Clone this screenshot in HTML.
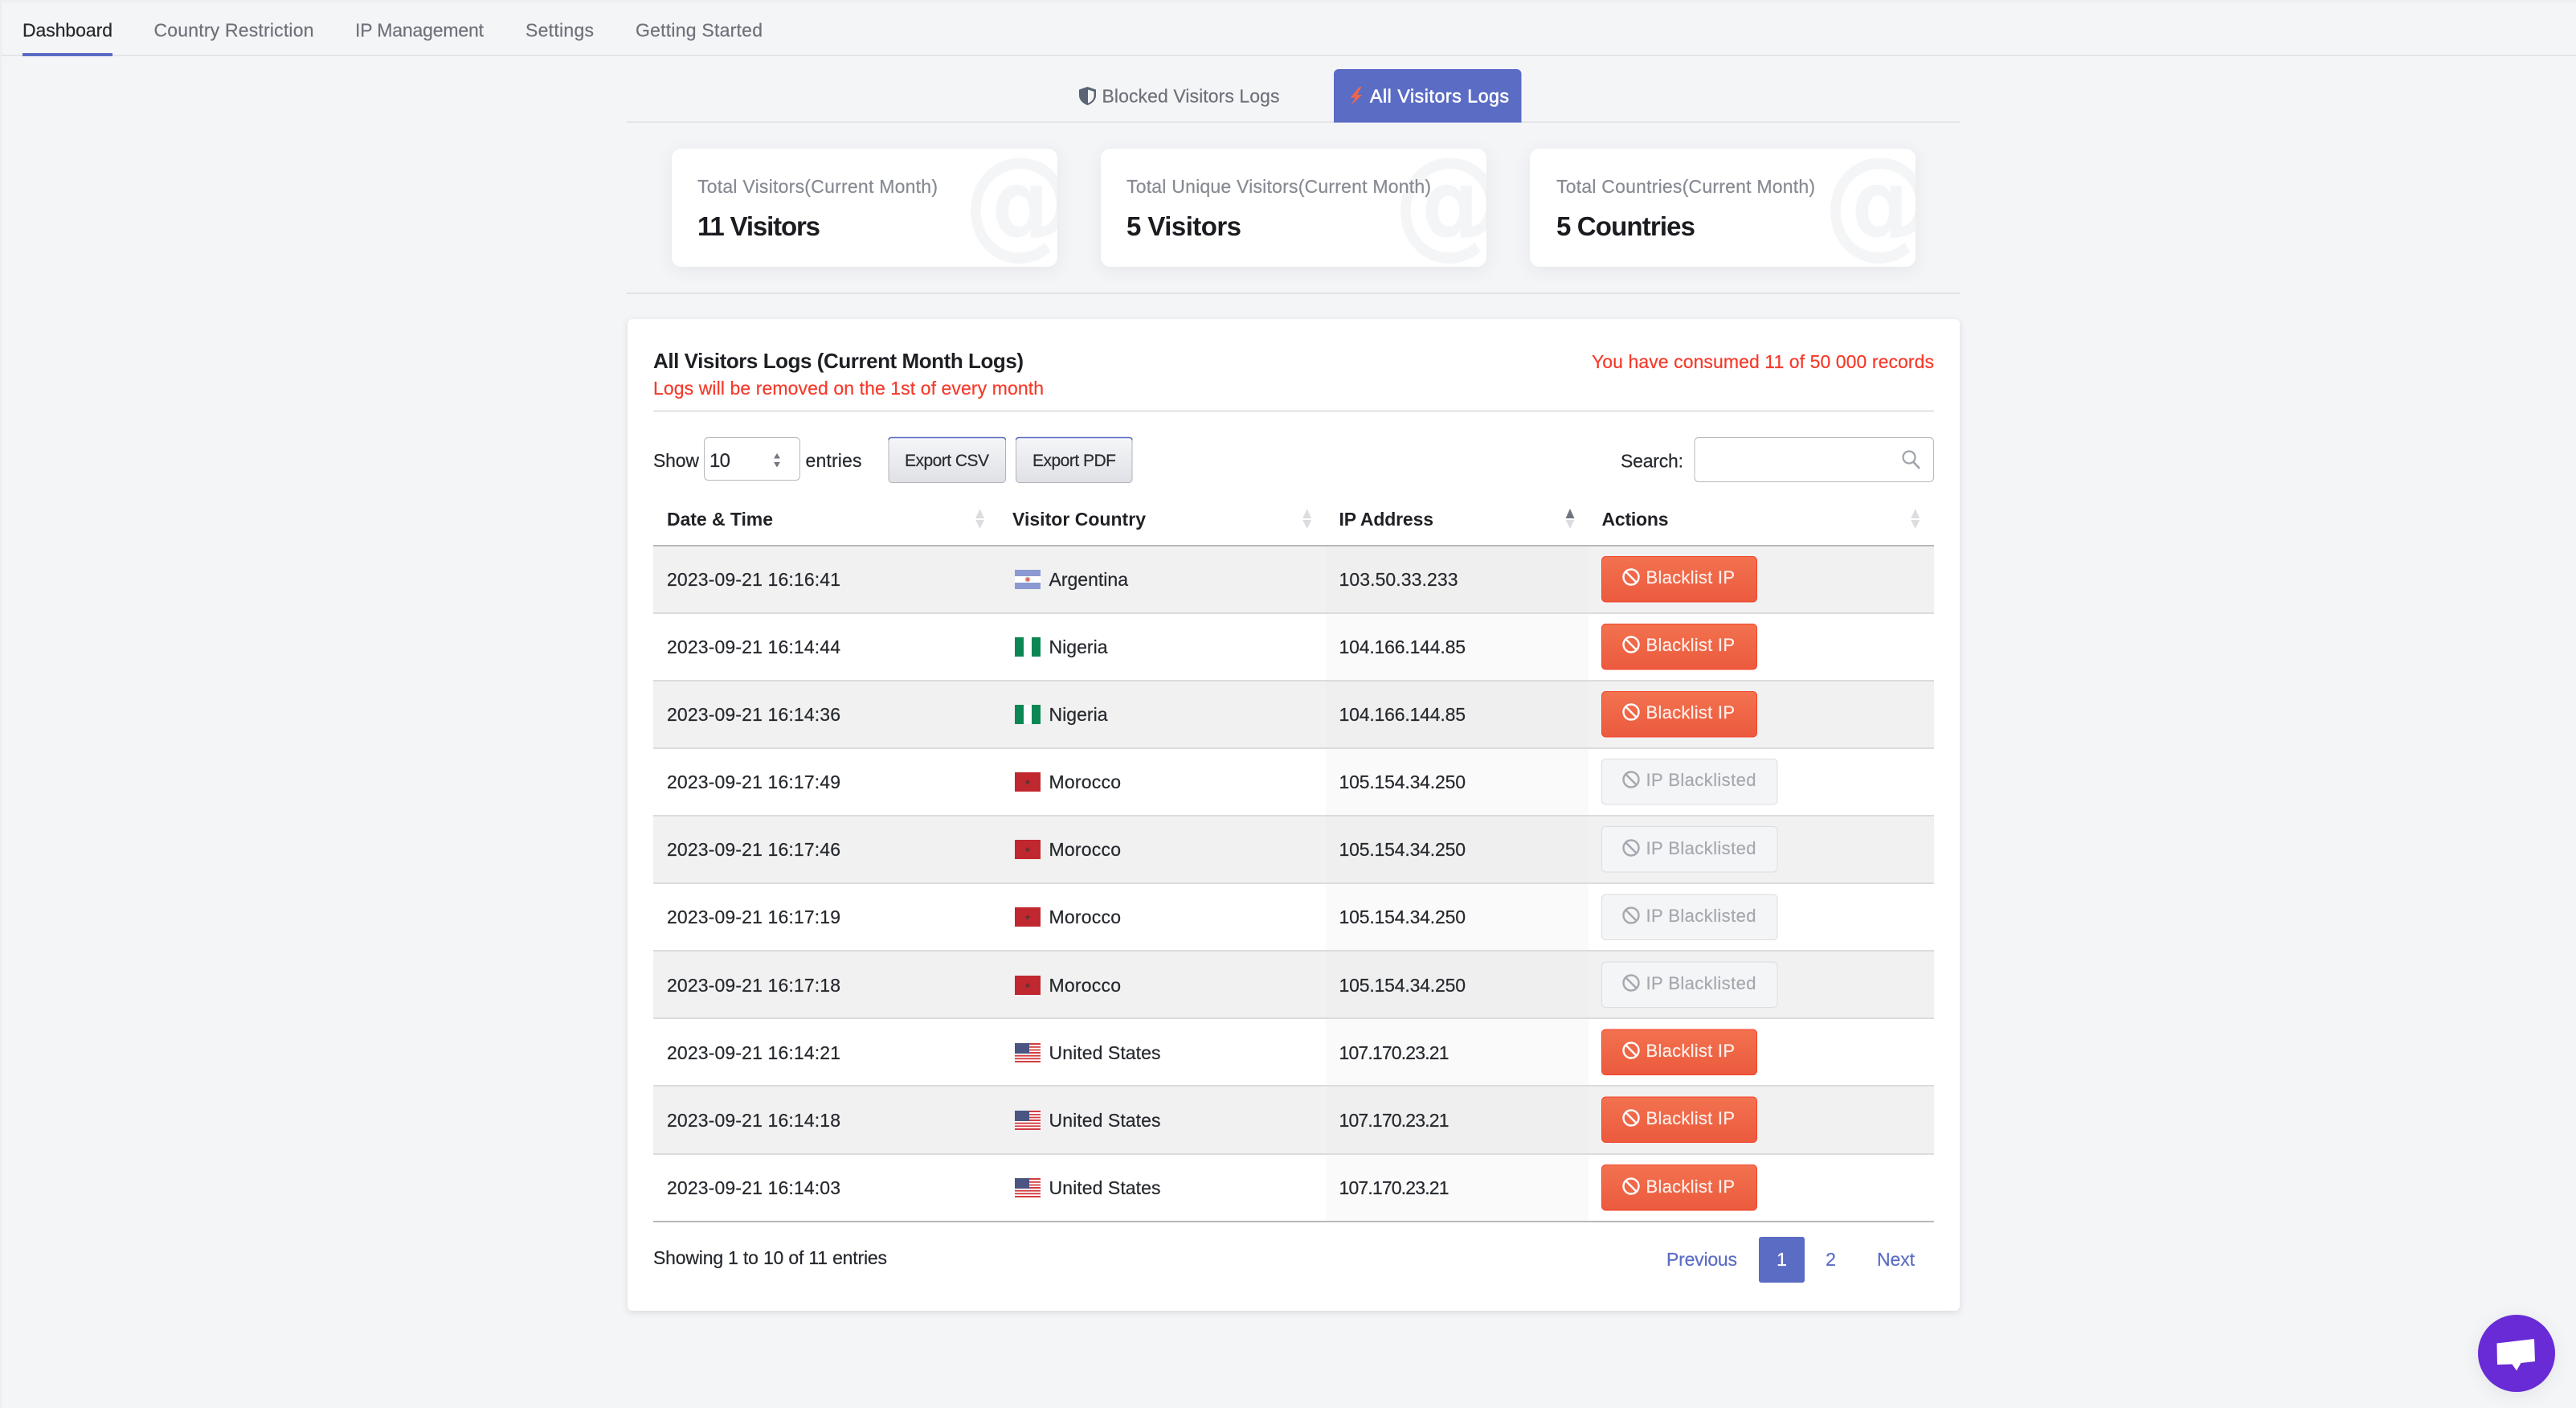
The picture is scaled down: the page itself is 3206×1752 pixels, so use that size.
<!DOCTYPE html>
<html lang="en">
<head>
<meta charset="utf-8">
<title>All Visitors Logs</title>
<style>
html,body{margin:0;padding:0;width:3206px;height:1752px;overflow:hidden;background:#f4f5f7}
svg{display:block}
text{font-family:"Liberation Sans",Arial,sans-serif;font-size:23px;color:#25282d;fill:currentColor;stroke:currentColor;stroke-width:.2;white-space:pre}
.nav{color:#6d7178}
.act{color:#26282d}
.lab{color:#868a92}
.val{font-size:33px;font-weight:700;color:#1b1c20;stroke-width:0}
.at{font-family:"DejaVu Sans",sans-serif;font-size:150px;font-weight:700;color:#f4f5f7;stroke-width:0}
.red{color:#f53a2a}
.th{font-weight:700;color:#1f2125;stroke-width:0}
.ttl{font-size:26px;font-weight:700;color:#1e2024;stroke-width:0}
.tab{color:#fff;stroke-width:.6}
.ex{font-size:21px;color:#2a2c31}
.sel{font-size:24px}
.bl{color:#fdeee9;font-size:22px}
.bd{color:#a5a8ae;font-size:22px}
.pg{color:#5b6cc4}
.wh{color:#fff}
</style>
</head>
<body>
<svg xmlns="http://www.w3.org/2000/svg" width="3206" height="1752" viewBox="0 0 3206 1752">
<defs>
<linearGradient id="gr" x1="0" y1="0" x2="0" y2="1"><stop offset="0" stop-color="#f2724f"/><stop offset="1" stop-color="#ec5a3e"/></linearGradient>
<linearGradient id="ge" x1="0" y1="0" x2="0" y2="1"><stop offset="0" stop-color="#f5f6f8"/><stop offset="1" stop-color="#dfe1e6"/></linearGradient>
<clipPath id="c1"><rect x="836" y="185" width="480" height="147" rx="12"/></clipPath>
<clipPath id="c2"><rect x="1370" y="185" width="480" height="147" rx="12"/></clipPath>
<clipPath id="c3"><rect x="1904" y="185" width="480" height="147" rx="12"/></clipPath>
<symbol id="ar" width="32" height="24" viewBox="0 0 32 24"><rect width="32" height="24" fill="#8b9ad2"/><rect y="8" width="32" height="8" fill="#fff"/><circle cx="16" cy="12" r="3.4" fill="#c9c5c5"/><circle cx="16" cy="12" r="2.2" fill="#ee6350"/></symbol>
<symbol id="ng" width="32" height="24" viewBox="0 0 32 24"><rect width="32" height="24" fill="#fff"/><rect width="11" height="24" fill="#0a8754"/><rect x="21" width="11" height="24" fill="#0a8754"/></symbol>
<symbol id="ma" width="32" height="24" viewBox="0 0 32 24"><rect width="32" height="24" fill="#c1272f"/><path d="M16 8.500l1 2.500 2.500 .2-2 1.600 .7 2.500-2.200-1.400-2.200 1.400 .7-2.500-2-1.600 2.500-.2z" fill="#5a3438"/></symbol>
<symbol id="us" width="32" height="24" viewBox="0 0 32 24"><rect width="32" height="24" fill="#fff"/><path d="M0 0h32v2H0zM0 4h32v1.8H0zM0 7.600h32v1.800H0zM0 11h32v2H0zM0 14.800h32v1.800H0zM0 18.400h32v1.800H0zM0 22h32v2H0z" fill="#d23c40"/><rect width="18" height="13" fill="#4a5582"/></symbol>
<symbol id="ban" width="24" height="24" viewBox="0 0 24 24"><circle cx="12" cy="12" r="9.500" fill="none" stroke="currentColor" stroke-width="2.400"/><path d="M5.500 5.500l13 13" stroke="currentColor" stroke-width="2.400"/></symbol>
</defs>

<rect width="3206" height="1752" fill="#f4f5f7"/>
<rect width="3206" height="3" fill="#efefef"/>
<rect width="2" height="1752" fill="#eeeeef"/>

<!-- Top navigation -->
<rect x="2" y="68" width="3204" height="2" fill="#e4e5e8"/>
<rect x="28" y="66" width="112" height="4" fill="#5b6cc4"/>
<text x="28" y="45.500" class="act" textLength="112">Dashboard</text>
<text x="191.500" y="45.500" class="nav" textLength="199">Country Restriction</text>
<text x="442" y="45.500" class="nav" textLength="160">IP Management</text>
<text x="654" y="45.500" class="nav" textLength="85">Settings</text>
<text x="791" y="45.500" class="nav" textLength="158">Getting Started</text>

<!-- Tabs -->
<rect x="780" y="151" width="1659" height="2" fill="#e4e5e8"/>
<path d="M1353.500 108l10.500 3.500v7c0 6-4.500 10-10.500 12.500c-6-2.500-10.500-6.500-10.500-12.500v-7z" fill="#5a6474"/>
<path d="M1354 111.500l7.500 2.500v5c0 4.500-3 7.500-7.500 9.500z" fill="#f4f5f7"/>
<text x="1371.500" y="127.500" class="nav" textLength="221">Blocked Visitors Logs</text>
<path d="M1660 152.500V92a6 6 0 0 1 6-6h221.500a6 6 0 0 1 6 6v60.500z" fill="#5b6cc4"/>
<path d="M1692 108l-11.500 13.500h6.500l-6 9.500l14.500-13h-6.500l5.500-10z" fill="#f0654a"/>
<text x="1705" y="127.500" class="tab" textLength="173">All Visitors Logs</text>

<!-- Stat cards -->
<g style="filter:drop-shadow(0 4px 10px rgba(30,35,50,.07))">
<rect x="836" y="185" width="480" height="147" rx="12" fill="#fff"/>
<rect x="1370" y="185" width="480" height="147" rx="12" fill="#fff"/>
<rect x="1904" y="185" width="480" height="147" rx="12" fill="#fff"/>
</g>
<g clip-path="url(#c1)"><text transform="translate(1199 302) scale(.92 1)" class="at">@</text></g>
<g clip-path="url(#c2)"><text transform="translate(1734 302) scale(.92 1)" class="at">@</text></g>
<g clip-path="url(#c3)"><text transform="translate(2269 302) scale(.92 1)" class="at">@</text></g>
<text x="868" y="240" class="lab" textLength="299">Total Visitors(Current Month)</text>
<text x="1402" y="240" class="lab" textLength="379">Total Unique Visitors(Current Month)</text>
<text x="1937" y="240" class="lab" textLength="322">Total Countries(Current Month)</text>
<text x="868" y="293" class="val" textLength="153">11 Visitors</text>
<text x="1402" y="293" class="val" textLength="143">5 Visitors</text>
<text x="1937" y="293" class="val" textLength="173">5 Countries</text>
<rect x="780" y="364" width="1659" height="2" fill="#e1e2e5"/>

<!-- Main card -->
<rect x="781" y="397" width="1658" height="1234" rx="6" fill="#fff" style="filter:drop-shadow(0 2px 4px rgba(30,35,50,.13))"/>
<text x="813" y="458" class="ttl" textLength="461">All Visitors Logs (Current Month Logs)</text>
<text x="813" y="491" class="red" textLength="486">Logs will be removed on the 1st of every month</text>
<text x="1981" y="458" class="red" textLength="426">You have consumed 11 of 50 000 records</text>
<rect x="813" y="510.500" width="1594" height="2" fill="#e2e2e2"/>

<!-- Controls -->
<text x="813" y="581" textLength="57">Show</text>
<rect x="876.500" y="544.500" width="119" height="53" rx="5" fill="#fff" stroke="#b5b8be"/>
<text x="883" y="581" class="sel" textLength="26">10</text>
<path d="M967 564l4 6.500h-8zM967 581.500l4-6.500h-8z" fill="#73787f"/>
<text x="1002.500" y="581" textLength="70">entries</text>
<rect x="1106" y="544.500" width="145.500" height="56" rx="4" fill="url(#ge)" stroke="#b0b3ba"/>
<path d="M1106 547.500a3 3 0 0 1 3-3h139.500a3 3 0 0 1 3 3" fill="none" stroke="#5b6cc4" stroke-width="1.500"/>
<text x="1126" y="580" class="ex" textLength="105">Export CSV</text>
<rect x="1264.500" y="544.500" width="144.500" height="56" rx="4" fill="url(#ge)" stroke="#b0b3ba"/>
<path d="M1264.500 547.500a3 3 0 0 1 3-3h138.500a3 3 0 0 1 3 3" fill="none" stroke="#5b6cc4" stroke-width="1.500"/>
<text x="1285" y="580" class="ex" textLength="104">Export PDF</text>
<text x="2017" y="581.500" textLength="78">Search:</text>
<rect x="2109" y="544.500" width="297.500" height="55" rx="5" fill="#fff" stroke="#b5b8be"/>
<circle cx="2376" cy="569" r="7.500" fill="none" stroke="#9ea3ab" stroke-width="2.200"/>
<path d="M2381.500 575l7.500 8" stroke="#9ea3ab" stroke-width="2.600"/>

<!-- Table head -->
<text x="830" y="654" class="th" textLength="132">Date &amp; Time</text>
<text x="1260" y="654" class="th" textLength="166">Visitor Country</text>
<text x="1666.500" y="654" class="th" textLength="117.500">IP Address</text>
<text x="1993.500" y="654" class="th" textLength="83">Actions</text>
<path d="M1219.500 633l5.500 12h-11zM1219.500 658l5.500-11h-11zM1626.700 633l5.500 12h-11zM1626.700 658l5.500-11h-11zM1954 658l5.500-11h-11zM2383.700 633l5.500 12h-11zM2383.700 658l5.500-11h-11z" fill="#dcdde0"/>
<path d="M1954 633l5.500 12h-11z" fill="#6f757e"/>

<!-- Row backgrounds -->
<rect x="813" y="680" width="1594" height="82" fill="#f1f1f1"/>
<rect x="813" y="848" width="1594" height="82" fill="#f1f1f1"/>
<rect x="813" y="1016" width="1594" height="82" fill="#f1f1f1"/>
<rect x="813" y="1184" width="1594" height="82" fill="#f1f1f1"/>
<rect x="813" y="1352" width="1594" height="83" fill="#f1f1f1"/>
<rect x="1650" y="680" width="327" height="82" fill="#efefef"/>
<rect x="1650" y="764" width="327" height="82" fill="#fafafa"/>
<rect x="1650" y="848" width="327" height="82" fill="#efefef"/>
<rect x="1650" y="932" width="327" height="82" fill="#fafafa"/>
<rect x="1650" y="1016" width="327" height="82" fill="#efefef"/>
<rect x="1650" y="1100" width="327" height="82" fill="#fafafa"/>
<rect x="1650" y="1184" width="327" height="82" fill="#efefef"/>
<rect x="1650" y="1268" width="327" height="82" fill="#fafafa"/>
<rect x="1650" y="1352" width="327" height="83" fill="#efefef"/>
<rect x="1650" y="1437" width="327" height="82" fill="#fafafa"/>
<g fill="#dcdcdc">
<rect x="813" y="762" width="1594" height="2"/>
<rect x="813" y="846" width="1594" height="2"/>
<rect x="813" y="930" width="1594" height="2"/>
<rect x="813" y="1014" width="1594" height="2"/>
<rect x="813" y="1098" width="1594" height="2"/>
<rect x="813" y="1182" width="1594" height="2"/>
<rect x="813" y="1266" width="1594" height="2"/>
<rect x="813" y="1350" width="1594" height="2"/>
<rect x="813" y="1435" width="1594" height="2"/>
</g>
<rect x="813" y="678" width="1594" height="2" fill="#b9b9b9"/>
<rect x="813" y="1519" width="1594" height="2" fill="#b9b9b9"/>

<!-- Row 1 -->
<text x="830" y="729" textLength="216">2023-09-21 16:16:41</text>
<use href="#ar" x="1263" y="709"/>
<text x="1305.500" y="729" textLength="98.500">Argentina</text>
<text x="1666.500" y="729" textLength="148">103.50.33.233</text>
<rect x="1993.500" y="692.500" width="193" height="56.500" rx="5" fill="url(#gr)" stroke="#f4432c"/>
<use href="#ban" x="2018" y="706" style="color:#fff"/>
<text x="2048.500" y="726" class="bl" textLength="110.500">Blacklist IP</text>

<!-- Row 2 -->
<text x="830" y="813" textLength="216">2023-09-21 16:14:44</text>
<use href="#ng" x="1263" y="793"/>
<text x="1305.500" y="813" textLength="73">Nigeria</text>
<text x="1666.500" y="813" textLength="157.500">104.166.144.85</text>
<rect x="1993.500" y="776.500" width="193" height="56.500" rx="5" fill="url(#gr)" stroke="#f4432c"/>
<use href="#ban" x="2018" y="790" style="color:#fff"/>
<text x="2048.500" y="810" class="bl" textLength="110.500">Blacklist IP</text>

<!-- Row 3 -->
<text x="830" y="897" textLength="216">2023-09-21 16:14:36</text>
<use href="#ng" x="1263" y="877"/>
<text x="1305.500" y="897" textLength="73">Nigeria</text>
<text x="1666.500" y="897" textLength="157.500">104.166.144.85</text>
<rect x="1993.500" y="860.500" width="193" height="56.500" rx="5" fill="url(#gr)" stroke="#f4432c"/>
<use href="#ban" x="2018" y="874" style="color:#fff"/>
<text x="2048.500" y="894" class="bl" textLength="110.500">Blacklist IP</text>

<!-- Row 4 -->
<text x="830" y="981" textLength="216">2023-09-21 16:17:49</text>
<use href="#ma" x="1263" y="961"/>
<text x="1305.500" y="981" textLength="89.500">Morocco</text>
<text x="1666.500" y="981" textLength="157.500">105.154.34.250</text>
<rect x="1993.500" y="944.500" width="218.500" height="56.500" rx="5" fill="#f4f5f7" stroke="#dcdde0"/>
<use href="#ban" x="2018" y="958" style="color:#a5a8ae"/>
<text x="2048.500" y="978" class="bd" textLength="137">IP Blacklisted</text>

<!-- Row 5 -->
<text x="830" y="1065" textLength="216">2023-09-21 16:17:46</text>
<use href="#ma" x="1263" y="1045"/>
<text x="1305.500" y="1065" textLength="89.500">Morocco</text>
<text x="1666.500" y="1065" textLength="157.500">105.154.34.250</text>
<rect x="1993.500" y="1028.500" width="218.500" height="56.500" rx="5" fill="#f4f5f7" stroke="#dcdde0"/>
<use href="#ban" x="2018" y="1043" style="color:#a5a8ae"/>
<text x="2048.500" y="1063" class="bd" textLength="137">IP Blacklisted</text>

<!-- Row 6 -->
<text x="830" y="1149" textLength="216">2023-09-21 16:17:19</text>
<use href="#ma" x="1263" y="1129"/>
<text x="1305.500" y="1149" textLength="89.500">Morocco</text>
<text x="1666.500" y="1149" textLength="157.500">105.154.34.250</text>
<rect x="1993.500" y="1113" width="218.500" height="56.500" rx="5" fill="#f4f5f7" stroke="#dcdde0"/>
<use href="#ban" x="2018" y="1127" style="color:#a5a8ae"/>
<text x="2048.500" y="1147" class="bd" textLength="137">IP Blacklisted</text>

<!-- Row 7 -->
<text x="830" y="1234" textLength="216">2023-09-21 16:17:18</text>
<use href="#ma" x="1263" y="1214"/>
<text x="1305.500" y="1234" textLength="89.500">Morocco</text>
<text x="1666.500" y="1234" textLength="157.500">105.154.34.250</text>
<rect x="1993.500" y="1197" width="218.500" height="56.500" rx="5" fill="#f4f5f7" stroke="#dcdde0"/>
<use href="#ban" x="2018" y="1211" style="color:#a5a8ae"/>
<text x="2048.500" y="1231" class="bd" textLength="137">IP Blacklisted</text>

<!-- Row 8 -->
<text x="830" y="1318" textLength="216">2023-09-21 16:14:21</text>
<use href="#us" x="1263" y="1298"/>
<text x="1305.500" y="1318" textLength="139">United States</text>
<text x="1666.500" y="1318" textLength="137">107.170.23.21</text>
<rect x="1993.500" y="1281" width="193" height="56.500" rx="5" fill="url(#gr)" stroke="#f4432c"/>
<use href="#ban" x="2018" y="1295" style="color:#fff"/>
<text x="2048.500" y="1315" class="bl" textLength="110.500">Blacklist IP</text>

<!-- Row 9 -->
<text x="830" y="1402" textLength="216">2023-09-21 16:14:18</text>
<use href="#us" x="1263" y="1382"/>
<text x="1305.500" y="1402" textLength="139">United States</text>
<text x="1666.500" y="1402" textLength="137">107.170.23.21</text>
<rect x="1993.500" y="1365" width="193" height="56.500" rx="5" fill="url(#gr)" stroke="#f4432c"/>
<use href="#ban" x="2018" y="1379" style="color:#fff"/>
<text x="2048.500" y="1399" class="bl" textLength="110.500">Blacklist IP</text>

<!-- Row 10 -->
<text x="830" y="1486" textLength="216">2023-09-21 16:14:03</text>
<use href="#us" x="1263" y="1466"/>
<text x="1305.500" y="1486" textLength="139">United States</text>
<text x="1666.500" y="1486" textLength="137">107.170.23.21</text>
<rect x="1993.500" y="1449.500" width="193" height="56.500" rx="5" fill="url(#gr)" stroke="#f4432c"/>
<use href="#ban" x="2018" y="1464" style="color:#fff"/>
<text x="2048.500" y="1484" class="bl" textLength="110.500">Blacklist IP</text>

<!-- Footer -->
<text x="813" y="1573" textLength="291">Showing 1 to 10 of 11 entries</text>
<text x="2074" y="1575" class="pg" textLength="88">Previous</text>
<rect x="2189" y="1539" width="57" height="57" rx="3" fill="#5b6cc4"/>
<text x="2217.500" y="1575" text-anchor="middle" class="wh">1</text>
<text x="2278.500" y="1575" text-anchor="middle" class="pg">2</text>
<text x="2336" y="1575" class="pg" textLength="47">Next</text>

<!-- Chat launcher -->
<circle cx="3132" cy="1684" r="48" fill="#682bd5" style="filter:drop-shadow(0 4px 10px rgba(30,35,50,.08))"/>
<path d="M3107.500 1671.500L3154 1666l1 28-17.500 2-5.500 9.500-5.500-8-18.500 .5z" fill="#fff"/>
</svg>
</body>
</html>
